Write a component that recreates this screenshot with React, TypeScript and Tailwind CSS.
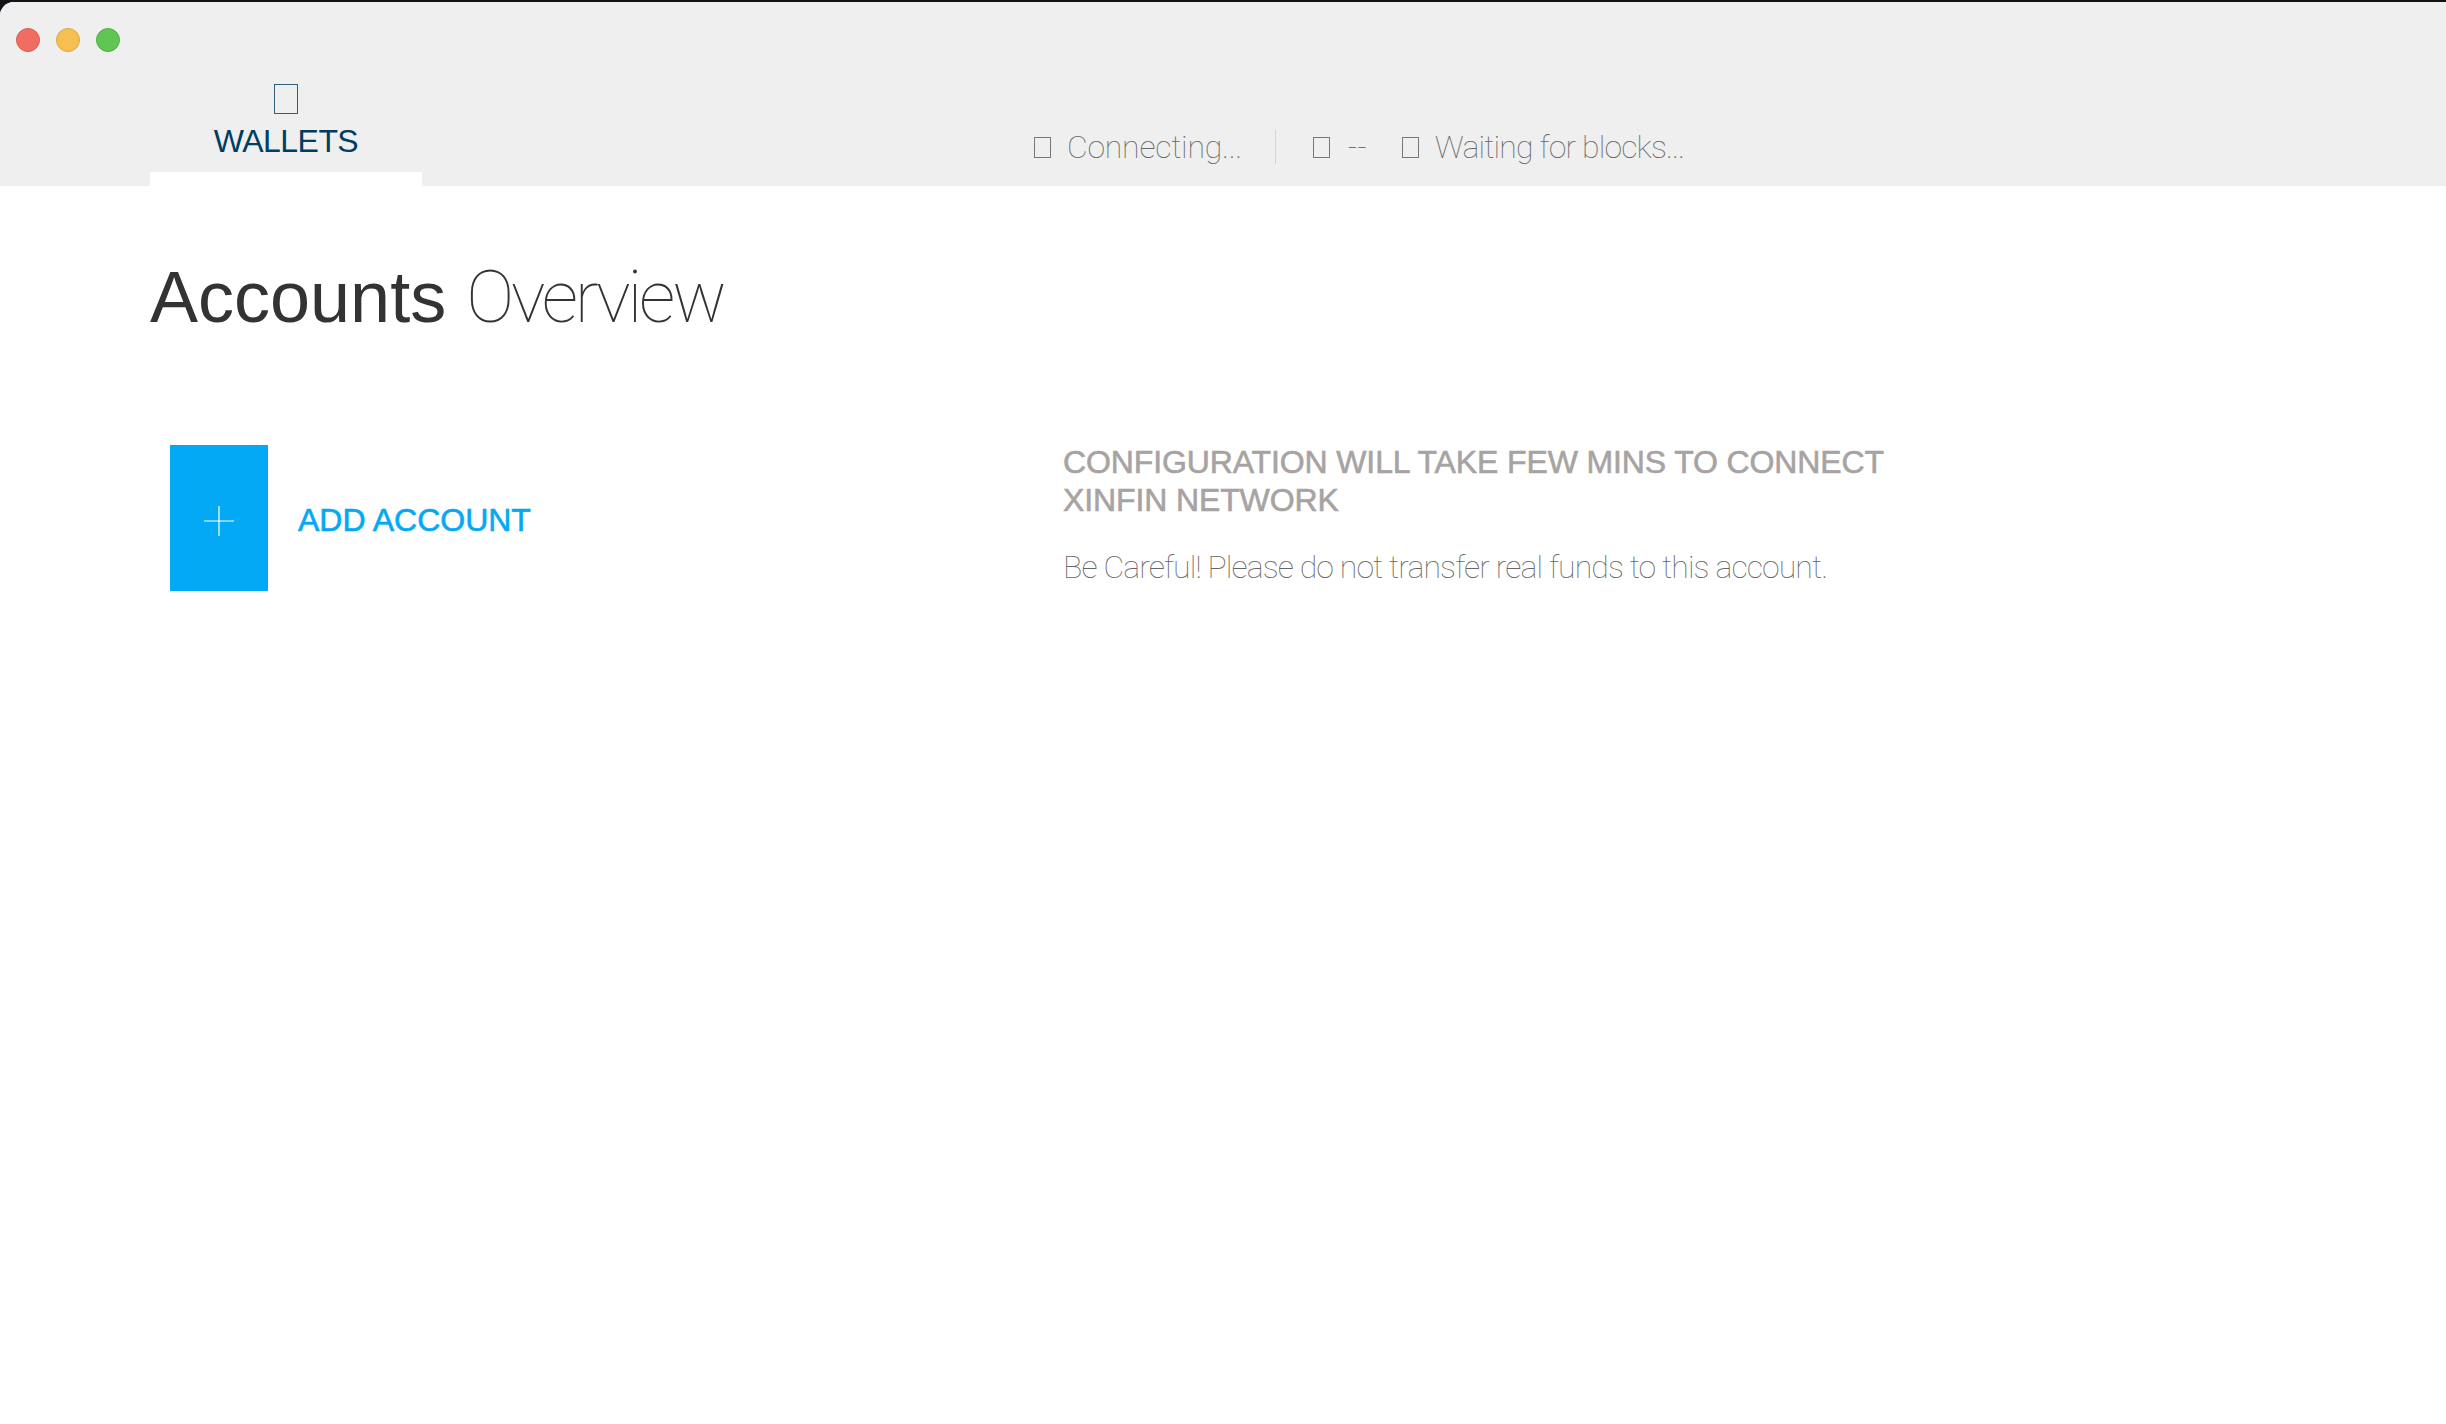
export default function App() {
  const sans = "font-['Liberation_Sans',Arial,sans-serif]";
  const thin = "font-['Roboto',sans-serif] font-thin";
  return (
    <div className={`w-[2446px] h-[1424px] bg-[#111417] overflow-hidden pt-[2px] ${sans}`}>
      <div className="h-full bg-white rounded-tl-[14px] overflow-hidden">
        <header className="h-[184px] bg-[#efefef] flex flex-col">
          <div className="flex gap-[16px] pl-[16px] pt-[26px]">
            <span className="w-[24px] h-[24px] rounded-full bg-[#f16c62] border border-[#dc5c52]" />
            <span className="w-[24px] h-[24px] rounded-full bg-[#f7bf52] border border-[#e0a73f]" />
            <span className="w-[24px] h-[24px] rounded-full bg-[#61c554] border border-[#52ae46]" />
          </div>
          <div className="flex items-end flex-1">
            <div className="ml-[150px] w-[272px] flex flex-col items-center h-[134px] pt-[32px] relative">
              <span className="w-[24px] h-[30px] border border-[#2f6078]" />
              <span className="text-[32px] leading-[36px] mt-[9px] tracking-[-0.55px] text-[#003e5f]">WALLETS</span>
              <span className="absolute bottom-0 left-0 right-0 h-[14px] bg-white" />
            </div>
            <div className={`ml-[612px] flex items-center h-[46px] mb-[16px] text-[32px] text-[#666] ${thin}`}>
              <span className="w-[17px] h-[21px] border border-[#777] mr-[16px]" />
              <span className="tracking-[-0.25px]">Connecting...</span>
              <span className="w-px h-[34px] bg-[#d4d4d4] ml-[33px] mr-[37px]" />
              <span className="w-[17px] h-[21px] border border-[#777] mr-[18px]" />
              <span>--</span>
              <span className="w-[17px] h-[21px] border border-[#777] ml-[35px] mr-[16px]" />
              <span className="tracking-[-0.85px]">Waiting for blocks...</span>
            </div>
          </div>
        </header>
        <main className="pl-[150px]">
          <h1 className="text-[72px] leading-[84px] mt-[69px] text-[#333] whitespace-nowrap">
            Accounts <span className={`${thin} tracking-[-3.2px]`}>Overview</span>
          </h1>
          <div className="flex mt-[105px]">
            <div className="w-[913px] pl-[20px] flex items-center">
              <div className="w-[98px] h-[146px] bg-[#03a9f4] flex items-center justify-center">
                <svg className="mt-[6px]" width="32" height="32" viewBox="0 0 32 32" stroke="#fff" strokeWidth="1.2"><path d="M16 1v30M1 16h30" /></svg>
              </div>
              <span className="ml-[30px] mt-[4px] text-[32px] text-[#03a9f4] [-webkit-text-stroke:0.6px_#03a9f4]">ADD ACCOUNT</span>
            </div>
            <div className="w-[840px]">
              <h2 className="text-[32px] leading-[38px] tracking-[-0.12px] text-[#a8a3a3] [-webkit-text-stroke:0.6px_#a8a3a3] -mt-[2px]">CONFIGURATION WILL TAKE FEW MINS TO CONNECT XINFIN NETWORK</h2>
              <p className={`mt-[28px] text-[32px] leading-[40px] text-[#666] tracking-[-0.9px] ${thin}`}>Be Careful! Please do not transfer real funds to this account.</p>
            </div>
          </div>
        </main>
      </div>
    </div>
  );
}
